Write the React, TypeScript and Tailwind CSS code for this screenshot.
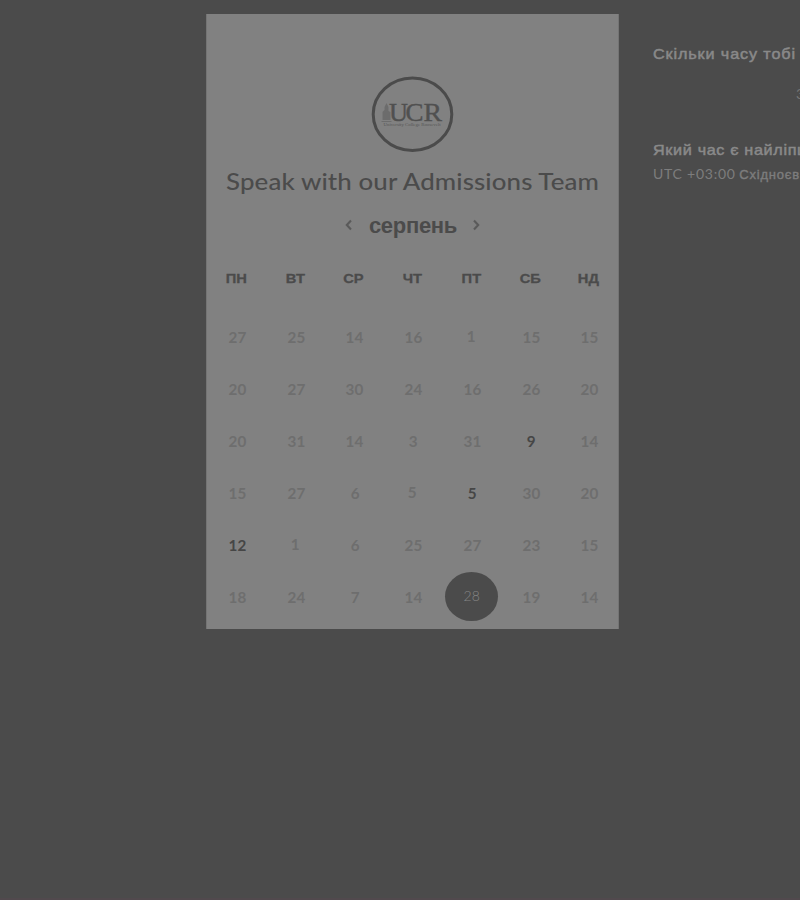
const WEEKDAYS = ['ПН', 'ВТ', 'СР', 'ЧТ', 'ПТ', 'СБ', 'НД'];

const WEEKS = [
  [27, 25, 14, 16, 1, 15, 15],
  [20, 27, 30, 24, 16, 26, 20],
  [20, 31, 14, 3, 31, 9, 14],
  [15, 27, 6, 5, 5, 30, 20],
  [12, 1, 6, 25, 27, 23, 15],
  [18, 24, 7, 14, 28, 19, 14],
];

const AVAILABLE = ['2-5', '3-4', '4-0'];
const SELECTED = '5-4';
// Days whose label sits slightly up and to the left of its cell's centre.
const RAISED = ['0-4', '3-3', '4-1'];

function Logo() {
  return (
    <svg width="84" height="78" viewBox="0 0 84 78" className="block -translate-x-[0.5px]">
      <ellipse cx="42" cy="39.3" rx="39.3" ry="36.3" fill="none" stroke="#4b4b4b" strokeWidth="3" />
      <path d="M12 45V37l2-2v-3l2-4 2 4v4l2 1v8zM11 46h10v1H11z" fill="#6c6c6c" />
      <g fill="#505050" stroke="#505050" strokeWidth="0.4" fontSize="25" className="font-['Liberation_Serif',serif]">
        <text x="18.5" y="45.5" textLength="19" lengthAdjust="spacingAndGlyphs">U</text>
        <text x="35" y="45.5" textLength="18" lengthAdjust="spacingAndGlyphs">C</text>
        <text x="53" y="45.5" textLength="18.5" lengthAdjust="spacingAndGlyphs">R</text>
      </g>
      <text x="13" y="51" fontSize="4.5" textLength="57" lengthAdjust="spacingAndGlyphs" fill="#565656" className="font-['Liberation_Serif',serif]">University College Roosevelt</text>
    </svg>
  );
}

function Chevron({ d }: { d: string }) {
  return (
    <svg width="8" height="12" viewBox="0 0 8 12" fill="none" stroke="#5a5a5a" strokeWidth="2.1" className="block -translate-y-px">
      <path d={d} />
    </svg>
  );
}

function Day({ value, id }: { value: number; id: string }) {
  if (id === SELECTED) {
    return (
      <div className="flex items-center justify-center">
        <span className="flex h-[49px] w-[53px] shrink-0 -translate-y-px items-center justify-center rounded-[50%] bg-[#4b4b4b] text-[14px] font-light text-[#858585]">
          <span className="translate-x-[0.5px] -translate-y-px">{value}</span>
        </span>
      </div>
    );
  }
  const tone = AVAILABLE.includes(id) ? 'text-[#464646]' : 'text-[#6e6e6e]';
  const shift = RAISED.includes(id) ? '-translate-x-px -translate-y-px' : '';
  return (
    <div className={`flex items-center justify-center pl-[2px] pt-0.5 font-bold ${tone} ${shift}`}>
      <span className="scale-x-[1.05]">{value}</span>
    </div>
  );
}

export default function App() {
  return (
    <main className="flex h-[900px] w-[800px] items-start overflow-hidden border-b-2 border-[#51494d] bg-[#4b4b4b] pl-[206px] pt-3.5 font-['Lato','Liberation_Sans',sans-serif] text-[#4b4b4b]">
      <section className="flex h-[615px] w-[413px] shrink-0 flex-col border-x border-[#747474] bg-[#818181]">
        <div className="flex justify-center pt-[61px]">
          <Logo />
        </div>
        <h1 className="mt-3 flex h-8 justify-center whitespace-nowrap text-[23.5px] font-medium leading-8 tracking-[0.1px]">
          <span className="scale-x-[1.1]">Speak with our Admissions Team</span>
        </h1>
        <div className="mt-[15px] flex h-7 items-center justify-center gap-[16px] font-['Liberation_Sans',sans-serif] text-[22px] font-bold leading-7">
          <Chevron d="M7 1.5L2.8 6L7 10.5" />
          <span className="translate-x-[0.5px] tracking-[-0.3px]">серпень</span>
          <Chevron d="M1 1.5L5.2 6L1 10.5" />
        </div>
        <div className="mt-[27px] grid h-6 grid-cols-7 items-center text-center font-['Liberation_Sans',sans-serif] text-[13px] font-bold">
          {WEEKDAYS.map((d) => <span key={d} className="scale-x-[1.13] [-webkit-text-stroke:0.3px_#4b4b4b]">{d}</span>)}
        </div>
        <div className="mt-5 grid auto-rows-[52px] grid-cols-7 text-[14.5px]">
          {WEEKS.map((week, r) => week.map((value, c) => <Day key={`${r}-${c}`} id={`${r}-${c}`} value={value} />))}
        </div>
      </section>
      <aside className="w-[181px] shrink-0 overflow-hidden whitespace-nowrap pl-[34px] pt-[30px] font-['Liberation_Sans',sans-serif] text-[#898989]">
        <h2 className="origin-left scale-x-[1.08] text-[15px] font-normal leading-5 tracking-[0.8px] [-webkit-text-stroke:0.5px_#898989]">Скільки часу тобі</h2>
        <p className="mt-5 pl-[143px] font-['Lato',sans-serif] text-[14px] leading-5 text-[#757575]">3</p>
        <h2 className="mt-9 origin-left scale-x-[1.08] text-[15px] font-normal leading-5 tracking-[0.6px] [-webkit-text-stroke:0.5px_#898989]">Який час є найліпший</h2>
        <p className="mt-1 text-[13px] leading-5 text-[#7d7d7d]">
          <span className="font-['Lato',sans-serif] text-[14px] tracking-[0.75px]">UTC +03:00</span> <span className="tracking-[0.8px] [-webkit-text-stroke:0.4px_#7d7d7d]">Східноєвропейський</span>
        </p>
      </aside>
    </main>
  );
}
